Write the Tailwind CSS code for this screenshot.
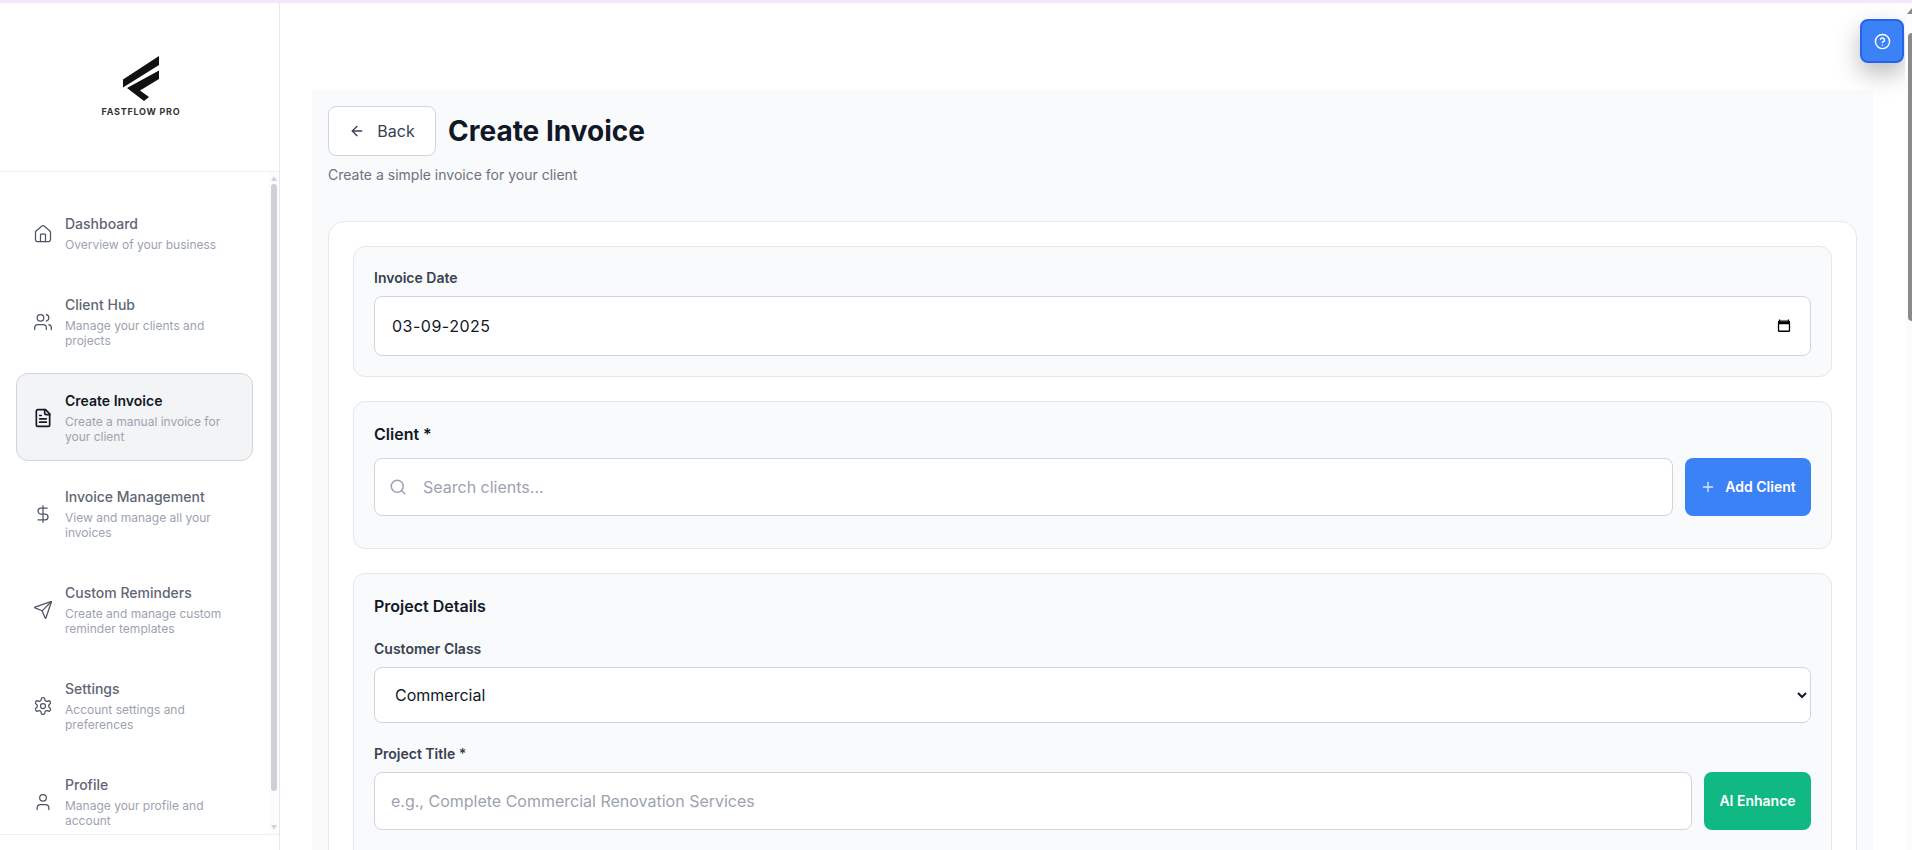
<!DOCTYPE html>
<html>
<head>
    <meta charset="UTF-8">
    <title>Create Invoice</title>
    <script src="https://cdn.jsdelivr.net/npm/@tailwindcss/browser@4"></script>
</head>
<body class="h-[850px] w-full overflow-hidden bg-white font-['Inter',sans-serif]">
    <div class="h-[3px] bg-[#f3e8fb]"></div>
    <div class="flex h-[847px]">
        <!-- SIDEBAR -->
        <aside class="relative flex w-[280px] shrink-0 flex-col border-r border-[#e5e7eb] bg-white">
            <div class="flex h-[169px] shrink-0 flex-col items-center border-b border-[#f0f1f3] pt-[53px] pl-[3px]">
                <svg class="h-[45px] w-[38px]" viewBox="0 0 38 45" fill="#111111">
                    <path d="M37 0V9L1 31.5V23.5Z"/>
                    <path d="M37 14.5V23L18 34.500L27 41L22 45L5 32Z"/>
                </svg>
                <div class="mt-[5px] text-[9px] leading-[12px] font-bold tracking-[0.75px] text-[#333333]">FASTFLOW PRO</div>
            </div>
            <nav class="flex h-[662px] shrink-0 flex-col gap-2 overflow-hidden pt-6 pr-[26px] pl-4">
                <a class="flex items-center gap-3 rounded-xl border border-transparent px-4 pt-[17px] pb-4">
                    <svg class="mt-[2px] size-5 shrink-0" viewBox="0 0 24 24" fill="none" stroke="#4b5563" stroke-width="1.500" stroke-linecap="round" stroke-linejoin="round"><path d="M15 21v-8a1 1 0 0 0-1-1h-4a1 1 0 0 0-1 1v8"/><path d="M3 10a2 2 0 0 1 .709-1.528l7-5.999a2 2 0 0 1 2.582 0l7 5.999A2 2 0 0 1 21 10v9a2 2 0 0 1-2 2H5a2 2 0 0 1-2-2z"/></svg>
                    <div class="min-w-0 flex-1">
                        <div class="text-sm leading-5 font-medium text-[#5f6675]">Dashboard</div>
                        <div class="mt-[3px] text-xs leading-[15px] text-[#9ca3af]">Overview of your business</div>
                    </div>
                </a>
                <a class="flex items-center gap-3 rounded-xl border border-transparent px-4 pt-[17px] pb-4">
                    <svg class="size-5 shrink-0" viewBox="0 0 24 24" fill="none" stroke="#4b5563" stroke-width="1.500" stroke-linecap="round" stroke-linejoin="round"><path d="M16 21v-2a4 4 0 0 0-4-4H6a4 4 0 0 0-4 4v2"/><circle cx="9" cy="7" r="4"/><path d="M22 21v-2a4 4 0 0 0-3-3.870"/><path d="M16 3.130a4 4 0 0 1 0 7.750"/></svg>
                    <div class="min-w-0 flex-1">
                        <div class="text-sm leading-5 font-medium text-[#5f6675]">Client Hub</div>
                        <div class="mt-[3px] text-xs leading-[15px] text-[#9ca3af]">Manage your clients and projects</div>
                    </div>
                </a>
                <a class="flex items-center gap-3 rounded-xl border border-[#d1d5db] bg-[#f3f4f6] px-4 pt-[17px] pb-4">
                    <svg class="size-5 shrink-0" viewBox="0 0 24 24" fill="none" stroke="#111827" stroke-width="2" stroke-linecap="round" stroke-linejoin="round"><path d="M15 2H6a2 2 0 0 0-2 2v16a2 2 0 0 0 2 2h12a2 2 0 0 0 2-2V7Z"/><path d="M14 2v4a2 2 0 0 0 2 2h4"/><path d="M10 9H8"/><path d="M16 13H8"/><path d="M16 17H8"/></svg>
                    <div class="min-w-0 flex-1">
                        <div class="text-sm leading-5 font-semibold text-[#111827]">Create Invoice</div>
                        <div class="mt-[3px] text-xs leading-[15px] text-[#9ca3af]">Create a manual invoice for your client</div>
                    </div>
                </a>
                <a class="flex items-center gap-3 rounded-xl border border-transparent px-4 pt-[17px] pb-4">
                    <svg class="size-5 shrink-0" viewBox="0 0 24 24" fill="none" stroke="#4b5563" stroke-width="1.500" stroke-linecap="round" stroke-linejoin="round"><line x1="12" x2="12" y1="2" y2="22"/><path d="M17 5H9.500a3.500 3.500 0 0 0 0 7h5a3.500 3.500 0 0 1 0 7H6"/></svg>
                    <div class="min-w-0 flex-1">
                        <div class="text-sm leading-5 font-medium text-[#5f6675]">Invoice Management</div>
                        <div class="mt-[3px] text-xs leading-[15px] text-[#9ca3af]">View and manage all your invoices</div>
                    </div>
                </a>
                <a class="flex items-center gap-3 rounded-xl border border-transparent px-4 pt-[17px] pb-4">
                    <svg class="size-5 shrink-0" viewBox="0 0 24 24" fill="none" stroke="#4b5563" stroke-width="1.500" stroke-linecap="round" stroke-linejoin="round"><path d="M14.536 21.686a.5.5 0 0 0 .937-.024l6.500-19a.496.496 0 0 0-.635-.635l-19 6.500a.5.5 0 0 0-.024.937l7.930 3.180a2 2 0 0 1 1.112 1.110z"/><path d="m21.854 2.147-10.940 10.939"/></svg>
                    <div class="min-w-0 flex-1">
                        <div class="text-sm leading-5 font-medium text-[#5f6675]">Custom Reminders</div>
                        <div class="mt-[3px] text-xs leading-[15px] text-[#9ca3af]">Create and manage custom reminder templates</div>
                    </div>
                </a>
                <a class="flex items-center gap-3 rounded-xl border border-transparent px-4 pt-[17px] pb-4">
                    <svg class="size-5 shrink-0" viewBox="0 0 24 24" fill="none" stroke="#4b5563" stroke-width="1.500" stroke-linecap="round" stroke-linejoin="round"><path d="M12.220 2h-.44a2 2 0 0 0-2 2v.18a2 2 0 0 1-1 1.730l-.43.25a2 2 0 0 1-2 0l-.15-.08a2 2 0 0 0-2.730.73l-.22.380a2 2 0 0 0 .73 2.730l.15.1a2 2 0 0 1 1 1.720v.51a2 2 0 0 1-1 1.740l-.15.09a2 2 0 0 0-.73 2.730l.22.380a2 2 0 0 0 2.730.73l.15-.08a2 2 0 0 1 2 0l.43.25a2 2 0 0 1 1 1.730V20a2 2 0 0 0 2 2h.44a2 2 0 0 0 2-2v-.18a2 2 0 0 1 1-1.730l.43-.25a2 2 0 0 1 2 0l.15.08a2 2 0 0 0 2.730-.73l.22-.390a2 2 0 0 0-.73-2.730l-.15-.08a2 2 0 0 1-1-1.740v-.5a2 2 0 0 1 1-1.740l.15-.09a2 2 0 0 0 .73-2.730l-.22-.380a2 2 0 0 0-2.730-.73l-.15.08a2 2 0 0 1-2 0l-.43-.25a2 2 0 0 1-1-1.730V4a2 2 0 0 0-2-2z"/><circle cx="12" cy="12" r="3"/></svg>
                    <div class="min-w-0 flex-1">
                        <div class="text-sm leading-5 font-medium text-[#5f6675]">Settings</div>
                        <div class="mt-[3px] text-xs leading-[15px] text-[#9ca3af]">Account settings and preferences</div>
                    </div>
                </a>
                <a class="flex items-center gap-3 rounded-xl border border-transparent px-4 pt-[17px] pb-4">
                    <svg class="size-5 shrink-0" viewBox="0 0 24 24" fill="none" stroke="#4b5563" stroke-width="1.500" stroke-linecap="round" stroke-linejoin="round"><path d="M19 21v-2a4 4 0 0 0-4-4H9a4 4 0 0 0-4 4v2"/><circle cx="12" cy="7" r="4"/></svg>
                    <div class="min-w-0 flex-1">
                        <div class="text-sm leading-5 font-medium text-[#5f6675]">Profile</div>
                        <div class="mt-[3px] text-xs leading-[15px] text-[#9ca3af]">Manage your profile and account</div>
                    </div>
                </a>
            </nav>
            <div class="flex-1 border-t border-[#f0f1f3]"></div>
            <!-- nav scrollbar -->
            <div class="absolute top-[169px] right-[1px] h-[662px] w-[9px] bg-[#fcfcfd]">
                <div class="absolute top-[4px] left-[1.500px] size-0 border-x-[3.500px] border-b-[5px] border-x-transparent border-b-[#d1d5db]"></div>
                <div class="absolute top-[12px] left-[2px] h-[607px] w-[6px] rounded-full bg-[#cdd0d8]"></div>
                <div class="absolute bottom-[4px] left-[1.500px] size-0 border-x-[3.500px] border-t-[5px] border-x-transparent border-t-[#d1d5db]"></div>
            </div>
        </aside>

        <!-- MAIN -->
        <main class="min-w-0 flex-1 pt-[87px] pr-[39px] pl-[32px]">
            <div class="h-[760px] overflow-hidden bg-[#f9fafb] px-4 pt-4">
                <div class="flex items-center gap-3">
                    <button class="flex h-[50px] w-[108px] items-center justify-center gap-3 rounded-lg border border-[#d1d5db] bg-white text-base text-[#374151]">
                        <svg class="size-4" viewBox="0 0 24 24" fill="none" stroke="currentColor" stroke-width="2" stroke-linecap="round" stroke-linejoin="round"><path d="m12 19-7-7 7-7"/><path d="M19 12H5"/></svg>
                        Back
                    </button>
                    <h1 class="text-[28px] leading-9 font-bold text-[#111827]">Create Invoice</h1>
                </div>
                <p class="mt-[9px] text-sm leading-5 text-[#6b7280]">Create a simple invoice for your client</p>

                <div class="mt-[36px] flex flex-col gap-6 rounded-2xl border border-[#e5e7eb] bg-white p-6">
                    <section class="rounded-xl border border-[#e5e7eb] bg-[#f9fafb] px-5 pt-[21px] pb-[20px]">
                        <label class="block text-sm leading-5 font-semibold text-[#374151]">Invoice Date</label>
                        <div class="mt-[8px] flex h-[60px] items-center justify-between rounded-lg border border-[#d1d5db] bg-white pr-[19px] pl-[17px]">
                            <span class="text-base tracking-[0.5px] text-[#111827]">03-09-2025</span>
                            <svg class="size-[14px]" viewBox="0 0 16 16" fill="none" stroke="#000000"><path d="M3 .5V3M13 .5V3" stroke-width="1.500"/><rect x="1.750" y="2.500" width="12.500" height="11.500" rx="1" stroke-width="1.500"/><path d="M1.500 4.500H14.500" stroke-width="3"/></svg>
                        </div>
                    </section>

                    <section class="rounded-xl border border-[#e5e7eb] bg-[#f9fafb] px-5 pt-5 pb-[32px]">
                        <h2 class="text-base leading-6 font-semibold text-[#111827]">Client *</h2>
                        <div class="mt-[12px] flex gap-3">
                            <div class="flex h-[58px] flex-1 items-center gap-4 rounded-lg border border-[#d1d5db] bg-white pl-[14px]">
                                <svg class="size-[18px] shrink-0" viewBox="0 0 24 24" fill="none" stroke="#9ca3af" stroke-width="2" stroke-linecap="round" stroke-linejoin="round"><path d="m21 21-4.340-4.340"/><circle cx="11" cy="11" r="8"/></svg>
                                <input class="w-full text-base text-[#111827] outline-none placeholder:text-[#9ca3af]" placeholder="Search clients...">
                            </div>
                            <button class="flex h-[58px] w-[126px] items-center justify-center gap-[9px] rounded-lg bg-[#3b82f6] text-sm font-semibold text-white">
                                <svg class="size-4" viewBox="0 0 24 24" fill="none" stroke="currentColor" stroke-width="2" stroke-linecap="round" stroke-linejoin="round" opacity="0.800"><path d="M5 12h14"/><path d="M12 5v14"/></svg>
                                Add Client
                            </button>
                        </div>
                    </section>

                    <section class="rounded-xl border border-[#e5e7eb] bg-[#f9fafb] px-5 pt-5 pb-10">
                        <h2 class="text-base leading-6 font-semibold text-[#111827]">Project Details</h2>
                        <label class="mt-[21px] block text-sm leading-5 font-semibold text-[#374151]">Customer Class</label>
                        <select class="mt-[8px] h-[56px] w-full rounded-lg border border-[#d1d5db] bg-white pl-4 text-base text-[#111827]">
                            <option>Commercial</option>
                        </select>
                        <label class="mt-[21px] block text-sm leading-5 font-semibold text-[#374151]">Project Title *</label>
                        <div class="mt-[8px] flex gap-3">
                            <input class="h-[58px] flex-1 rounded-lg border border-[#d1d5db] bg-white px-4 text-base text-[#111827] outline-none placeholder:text-[#9ca3af]" placeholder="e.g., Complete Commercial Renovation Services">
                            <button class="h-[58px] w-[107px] rounded-lg bg-[#10b981] text-sm font-semibold text-white">AI Enhance</button>
                        </div>
                    </section>
                </div>
            </div>
        </main>
    </div>

    <!-- floating help button -->
    <button class="fixed top-[19px] right-[8px] flex size-[44px] items-center justify-center rounded-lg border-2 border-[#2563eb] bg-[#3b82f6] shadow-[0_10px_24px_rgba(0,0,0,0.28)]">
        <svg class="size-[17px]" viewBox="0 0 24 24" fill="none" stroke="#ffffff" stroke-width="2" stroke-linecap="round" stroke-linejoin="round"><circle cx="12" cy="12" r="10"/><path d="M9.090 9a3 3 0 0 1 5.830 1c0 2-3 3-3 3"/><path d="M12 17h.01"/></svg>
    </button>

    <!-- page scrollbar -->
    <div class="fixed top-[3px] right-0 h-[847px] w-[7px] bg-[#fcfcfc]">
        <div class="absolute top-[5px] right-0 size-0 border-b-[6px] border-l-[5px] border-b-[#8a8a8a] border-l-transparent"></div>
        <div class="absolute top-[30px] right-0 h-[288px] w-[4px] rounded-l-full bg-[#8a8a8a]"></div>
    </div>
</body>
</html>
